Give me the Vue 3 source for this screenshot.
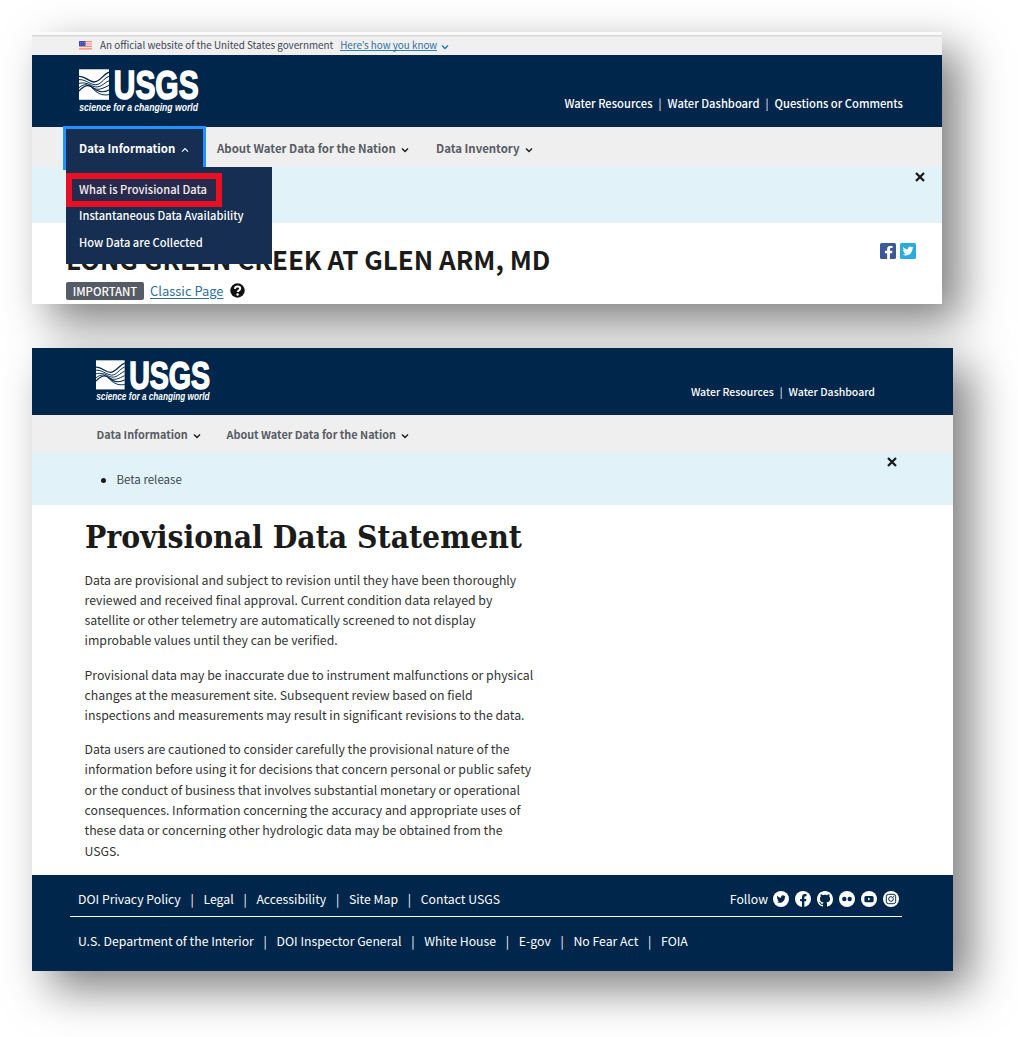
<script setup>
import { h } from 'vue'

const topLinks = ['Water Resources', 'Water Dashboard', 'Questions or Comments']
const pageLinks = ['Water Resources', 'Water Dashboard']
const menuItems = ['What is Provisional Data', 'Instantaneous Data Availability', 'How Data are Collected']
const paragraphs = [
  [
    'Data are provisional and subject to revision until they have been thoroughly',
    'reviewed and received final approval. Current condition data relayed by',
    'satellite or other telemetry are automatically screened to not display',
    'improbable values until they can be verified.'
  ],
  [
    'Provisional data may be inaccurate due to instrument malfunctions or physical',
    'changes at the measurement site. Subsequent review based on field',
    'inspections and measurements may result in significant revisions to the data.'
  ],
  [
    'Data users are cautioned to consider carefully the provisional nature of the',
    'information before using it for decisions that concern personal or public safety',
    'or the conduct of business that involves substantial monetary or operational',
    'consequences. Information concerning the accuracy and appropriate uses of',
    'these data or concerning other hydrologic data may be obtained from the',
    'USGS.'
  ]
]
const footerTop = ['DOI Privacy Policy', 'Legal', 'Accessibility', 'Site Map', 'Contact USGS']
const footerBottom = ['U.S. Department of the Interior', 'DOI Inspector General', 'White House', 'E-gov', 'No Fear Act', 'FOIA']

const birdPath =
  'M459.37 151.716c.325 4.548.325 9.097.325 13.645 0 138.72-105.583 298.558-298.558 298.558-59.452 0-114.68-17.219-161.137-47.106 8.447.974 16.568 1.299 25.34 1.299 49.055 0 94.213-16.568 130.274-44.832-46.132-.975-84.792-31.188-98.112-72.772 6.498.974 12.995 1.624 19.818 1.624 9.421 0 18.843-1.3 27.614-3.573-48.081-9.747-84.143-51.98-84.143-102.985v-1.299c13.969 7.797 30.214 12.67 47.431 13.319-28.264-18.843-46.781-51.005-46.781-87.391 0-19.492 5.197-37.36 14.294-52.954 51.655 63.675 129.3 105.258 216.365 109.807-1.624-7.797-2.599-15.918-2.599-24.04 0-57.828 46.782-104.934 104.934-104.934 30.213 0 57.502 12.67 76.67 33.137 23.715-4.548 46.456-13.32 66.599-25.34-7.798 24.366-24.366 44.833-46.132 57.827 21.117-2.273 41.584-8.122 60.426-16.243-14.292 20.791-32.161 39.308-52.628 54.253z'
const facebookPath =
  'M279.14 288l14.22-92.66h-88.91v-60.13c0-25.35 12.42-50.06 52.24-50.06h40.42V6.26S260.43 0 225.36 0c-73.22 0-121.08 44.38-121.08 124.72v70.62H22.89V288h81.39v224h100.17V288z'
const githubPath =
  'M8 0C3.58 0 0 3.58 0 8c0 3.54 2.29 6.53 5.47 7.59.4.07.55-.17.55-.38 0-.19-.01-.82-.01-1.49-2.01.37-2.53-.49-2.69-.94-.09-.23-.48-.94-.82-1.13-.28-.15-.68-.52-.01-.53.63-.01 1.08.58 1.23.82.72 1.21 1.87.87 2.33.66.07-.52.28-.87.51-1.07-1.78-.2-3.64-.89-3.64-3.95 0-.87.31-1.59.82-2.15-.08-.2-.36-1.02.08-2.12 0 0 .67-.21 2.2.82.64-.18 1.32-.27 2-.27s1.36.09 2 .27c1.53-1.04 2.2-.82 2.2-.82.44 1.1.16 1.92.08 2.12.51.56.82 1.27.82 2.15 0 3.07-1.87 3.75-3.65 3.95.29.25.54.73.54 1.48 0 1.07-.01 1.93-.01 2.2 0 .21.15.46.55.38A8.01 8.01 0 0 0 16 8c0-4.42-3.58-8-8-8z'

const Chevron = (props) =>
  h('svg', { viewBox: '0 0 8 8' }, [
    h('path', {
      d: props.up ? 'M1 5.6 4 2.6 7 5.6' : 'M1 2.6 4 5.6 7 2.6',
      fill: 'none',
      stroke: 'currentColor',
      'stroke-width': props.up ? 1.1 : 1.4
    })
  ])
Chevron.props = { up: Boolean }

const Cross = () =>
  h('svg', { viewBox: '0 0 10 10' }, [
    h('path', { d: 'M1 1 9 9M9 1 1 9', fill: 'none', stroke: '#1b1b1b', 'stroke-width': 2.3 })
  ])

const text = (attrs, value) => h('text', { fill: '#fff', lengthAdjust: 'spacingAndGlyphs', ...attrs }, value)
const wave = (d, width) => h('path', { d, fill: 'none', stroke: '#00264c', 'stroke-width': width })
const UsgsLogo = () =>
  h('svg', { viewBox: '0 0 120 45', overflow: 'visible' }, [
    h('rect', { x: 0, y: 0.3, width: 30, height: 30.5, fill: '#fff' }),
    wave('M0 7.4C6 6.8 9 12.4 15 13 21 13 24 5.4 30 3.2', 1.3),
    wave('M0 10.7C6 10.2 9 14.4 16 15.8 22 16.2 24 9.4 30 7.4', 1),
    wave('M0 14.4C5 13.2 9 14.4 14 17.2 21 20.2 25 13.6 30 11.8', 1),
    wave('M0 18.6C5 14.6 9 15 13 18.2 19 22.8 25 18.6 30 16.4', 1),
    wave('M0 22C5 16.6 9 14.8 14 18.8 19 23.4 24 24 30 21', 1.2),
    wave('M13 18.8C18 24.2 23 27 30 25.6', 1),
    text({ x: 34.8, y: 30.2, textLength: 84.8, 'font-family': 'Liberation Sans', 'font-weight': 700, 'font-size': 40.5, stroke: '#fff', 'stroke-width': 1.6 }, 'USGS'),
    text({ x: 0.3, y: 41.6, textLength: 118.6, 'font-family': 'Liberation Sans', 'font-weight': 700, 'font-style': 'italic', 'font-size': 10.6 }, 'science for a changing world')
  ])
</script>

<template>
  <div class="sheet">
    <section class="card first">
      <div class="banner">
        <svg class="flag" viewBox="0 0 13 9">
          <rect width="13" height="9" fill="#fbe9e7" />
          <path d="M0 .6h13M0 3h13M0 5.4h13M0 7.8h13" stroke="#ee8877" stroke-width="1.2" />
          <rect width="6.5" height="5" fill="#3f4bb0" />
          <path d="M1 1.4h5M1 3.3h5" stroke="#8f95d4" stroke-width=".7" stroke-dasharray="1 1" />
        </svg>
        <span class="official">An official website of the United States government</span>
        <a class="know">Here’s how you know</a>
        <Chevron class="chev" />
      </div>
      <header class="header">
        <UsgsLogo class="logo" />
        <nav class="links"><span v-for="l in topLinks" :key="l">{{ l }}</span></nav>
      </header>
      <div class="bar">
        <div class="tab active">
          <b>Data Information</b><Chevron up class="chev" />
          <div class="dropdown">
            <span v-for="m in menuItems" :key="m">{{ m }}</span>
            <i class="highlight"></i>
          </div>
        </div>
        <div class="tab about"><b>About Water Data for the Nation</b><Chevron class="chev" /></div>
        <div class="tab"><b>Data Inventory</b><Chevron class="chev" /></div>
      </div>
      <div class="alert"><Cross class="cross" /></div>
      <div class="station">
        <div class="station-info">
          <h2>LONG GREEN CREEK AT GLEN ARM, MD</h2>
          <div class="tags">
            <span class="badge">IMPORTANT</span>
            <a class="classic">Classic Page</a>
            <svg class="help" viewBox="0 0 16 16">
              <circle cx="8" cy="8" r="7.7" fill="#111" />
              <path d="M5.2 6.2C5.4 4.5 6.6 3.7 8.1 3.7 9.7 3.7 10.9 4.7 10.9 6.1 10.9 7.8 8.2 7.8 8.2 9.6" fill="none" stroke="#fff" stroke-width="2.1" />
              <circle cx="8.1" cy="12.2" r="1.3" fill="#fff" />
            </svg>
          </div>
        </div>
        <div class="share">
          <svg viewBox="0 0 16 16">
            <rect width="16" height="16" rx="1.6" fill="#3b5998" />
            <svg x="4.2" y="2.8" width="9" height="13.2" viewBox="0 0 320 512" preserveAspectRatio="none"><path :d="facebookPath" fill="#fff" /></svg>
          </svg>
          <svg viewBox="0 0 16 16">
            <rect width="16" height="16" rx="1.6" fill="#2ba9e1" />
            <svg x="2.5" y="2.5" width="11" height="11" viewBox="0 0 512 512"><path :d="birdPath" fill="#fff" /></svg>
          </svg>
        </div>
      </div>
    </section>

    <section class="card second">
      <header class="header">
        <UsgsLogo class="logo" />
        <nav class="links"><span v-for="l in pageLinks" :key="l">{{ l }}</span></nav>
      </header>
      <div class="bar">
        <div class="tab info"><b>Data Information</b><Chevron class="chev" /></div>
        <div class="tab"><b>About Water Data for the Nation</b><Chevron class="chev" /></div>
      </div>
      <div class="alert">
        <span class="beta">Beta release</span>
        <Cross class="cross" />
      </div>
      <main class="statement">
        <h1>Provisional Data Statement</h1>
        <p v-for="(p, i) in paragraphs" :key="i"><span v-for="line in p" :key="line">{{ line }}</span></p>
      </main>
      <footer class="footer">
        <div class="frow">
          <nav class="flinks"><span v-for="l in footerTop" :key="l">{{ l }}</span></nav>
          <div class="follow">
            <span class="flabel">Follow</span>
            <span class="social"><svg viewBox="0 0 16 16"><circle cx="8" cy="8" r="8" fill="#fff" /><svg x="3.6" y="3.5" width="9.2" height="9.2" viewBox="0 0 512 512"><path :d="birdPath" fill="#00264c" /></svg></svg></span>
            <span class="social"><svg viewBox="0 0 16 16"><circle cx="8" cy="8" r="8" fill="#fff" /><svg x="4.6" y="3" width="7.4" height="13" viewBox="0 0 320 512" preserveAspectRatio="none"><path :d="facebookPath" fill="#00264c" /></svg></svg></span>
            <span class="social"><svg viewBox="0 0 16 16"><path :d="githubPath" fill="#fff" /></svg></span>
            <span class="social"><svg viewBox="0 0 16 16"><circle cx="8" cy="8" r="8" fill="#fff" /><circle cx="5.3" cy="8" r="2.2" fill="#00264c" /><circle cx="10.7" cy="8" r="2.2" fill="#00264c" /></svg></span>
            <span class="social"><svg viewBox="0 0 16 16"><circle cx="8" cy="8" r="8" fill="#fff" /><rect x="3.4" y="4.9" width="9.2" height="6.3" rx="1.5" fill="#00264c" /><path d="M7 6.6v2.9L9.5 8z" fill="#fff" /></svg></span>
            <span class="social"><svg viewBox="0 0 16 16"><circle cx="8" cy="8" r="8" fill="#fff" /><rect x="3.3" y="3.3" width="9.4" height="9.4" rx="2.4" fill="none" stroke="#00264c" stroke-width="1" /><circle cx="8" cy="8" r="2.3" fill="none" stroke="#00264c" stroke-width="1" /><circle cx="10.7" cy="5.3" r=".6" fill="#00264c" /></svg></span>
          </div>
        </div>
        <nav class="flinks lower"><span v-for="l in footerBottom" :key="l">{{ l }}</span></nav>
      </footer>
    </section>
  </div>
</template>

<style>
body { margin: 0; background: #fff; }
</style>

<style scoped>
.sheet {
  width: 1018px; height: 1037px; box-sizing: border-box; padding: 32px 0 0 32px;
  position: relative; z-index: 0; overflow: hidden; background: #fff; color: #1b1b1b;
  font-family: "Noto Sans CJK KR", "Noto Sans", sans-serif; white-space: nowrap;
}
.sheet * { box-sizing: border-box; }
.card { position: relative; background: #fff; }
.card::before { content: ""; position: absolute; inset: 0; z-index: -1; box-shadow: 18px 18px 42px rgba(0, 0, 0, .5); }
.first { width: 910px; height: 272px; margin-bottom: 44px; }
.second { width: 921px; height: 623px; }

.banner {
  display: flex; height: 23px; padding-left: 47px; background: #f0f0f0; color: #3d4551;
  border-top: 3px solid #fafafa; box-shadow: inset 0 1.5px #d9d9d9; font-size: 9.84px; line-height: 21px;
}
.flag { width: 13px; height: 9px; margin: 6px 8px 0 0; }
.know { margin-left: 7px; height: 16px; color: #2e6f9e; border-bottom: 1px solid #2e7db5; }
.banner .chev { width: 8px; height: 8px; margin: 8px 0 0 4px; color: #1f78b4; }

.header { display: flex; justify-content: space-between; background: #00264c; color: #fff; }
.first .header { height: 72px; padding: 14px 39px 0 47px; font-size: 11.2px; }
.second .header { height: 67px; padding: 12px 78px 0 64px; font-size: 10.53px; }
.first .logo { width: 120px; height: 45px; }
.second .logo { width: 114.5px; height: 43px; }
.links { display: flex; line-height: 20px; font-weight: 500; }
.first .links { padding-top: 24px; }
.second .links { padding-top: 22px; }
.links span + span::before { content: "|"; margin: 0 6px; font-weight: 400; }

.bar { display: flex; background: #efefef; color: #565c65; line-height: 20px; }
.first .bar { height: 40px; padding-left: 34px; font-size: 11.43px; }
.second .bar { height: 38px; padding-left: 64.5px; font-size: 10.83px; }
.tab { display: flex; position: relative; padding-top: 11px; }
.second .tab { padding-top: 9px; }
.tab .chev { width: 8px; height: 8px; margin: 8px 0 0 5.5px; color: #1b1b1b; }
.tab.active { width: 137px; height: 38px; margin-top: 2px; padding: 9px 0 0 13px; background: #162e51; color: #fff; outline: 3px solid #2491ff; }
.tab.active .chev { color: #fff; }
.about { width: 233px; padding-left: 14px; }
.info { width: 130px; }
.dropdown {
  position: absolute; z-index: 2; left: 0; top: 38px; width: 206px; height: 97px;
  display: flex; flex-direction: column; padding: 9px 0 0 13px; background: #162e51;
  font-size: 11.15px; font-weight: 500; line-height: 26.3px;
}
.highlight { position: absolute; left: 0; top: 6px; width: 156px; height: 34px; border: 6px solid #e81123; background: rgba(232, 17, 35, .08); }

.alert { display: flex; justify-content: space-between; background: #e1f2f8; }
.first .alert { height: 56px; padding: 5px 17px 0 0; justify-content: flex-end; }
.second .alert { height: 52px; padding: 4px 56px 0 84.5px; font-size: 11.5px; }
.cross { width: 10px; height: 10px; }
.beta { display: flex; height: 20px; margin-top: 12px; line-height: 21px; color: #3d4551; }
.beta::before { content: ""; width: 5px; height: 5px; margin: 9px 11px 0 -16px; border-radius: 50%; background: #1b1b1b; }

.station { display: flex; justify-content: space-between; padding: 20px 26px 0 34px; }
h2 { margin: 1px 0 0; font-size: 25.93px; line-height: 30px; font-weight: 700; }
.tags { display: flex; padding-top: 6px; }
.badge { width: 78px; height: 18px; margin-top: 2px; border-radius: 2px; background: #565c65; color: #fff; font-size: 11.3px; font-weight: 500; line-height: 18.5px; text-align: center; }
.classic { margin-left: 6px; font-size: 12.95px; line-height: 22px; color: #2e6f9e; text-decoration: underline; text-underline-offset: 2px; }
.help { width: 15px; height: 15px; margin: 3px 0 0 6.5px; }
.share { display: flex; gap: 4px; }
.share > svg { width: 16px; height: 16px; }

.statement { height: 370px; padding: 12px 0 0 52.5px; font-size: 12.3px; line-height: 20.28px; color: #333; }
h1 { width: max-content; margin: 0 0 12.6px; font: 700 32px/40px "DejaVu Serif Condensed", "DejaVu Serif", serif; color: #1b1b1b; transform: scaleX(.985); transform-origin: 0 0; }
p { display: flex; flex-direction: column; margin: 0 0 13.8px; }

.footer { height: 96px; padding: 14px 51px 0 38px; background: #00264c; color: #fff; font-size: 12.28px; line-height: 20px; }
.frow { display: flex; justify-content: space-between; height: 28px; padding: 0 3px 0 8px; border-bottom: 1px solid #fff; }
.flinks { display: flex; }
.flinks span + span::before { content: "|"; margin: 0 9.7px; }
.lower { padding: 13.5px 0 0 8px; }
.follow { display: flex; }
.flabel { margin-right: 4.5px; }
.social { position: relative; width: 16px; height: 16px; margin-top: 2px; }
.social svg { display: block; }
.social > svg { width: 16px; height: 16px; }
.social + .social { margin-left: 6.1px; }
.social:not(:last-child)::after { content: ""; position: absolute; right: -4.5px; top: 19px; width: 3px; height: 1px; background: #0000ee; }
</style>
